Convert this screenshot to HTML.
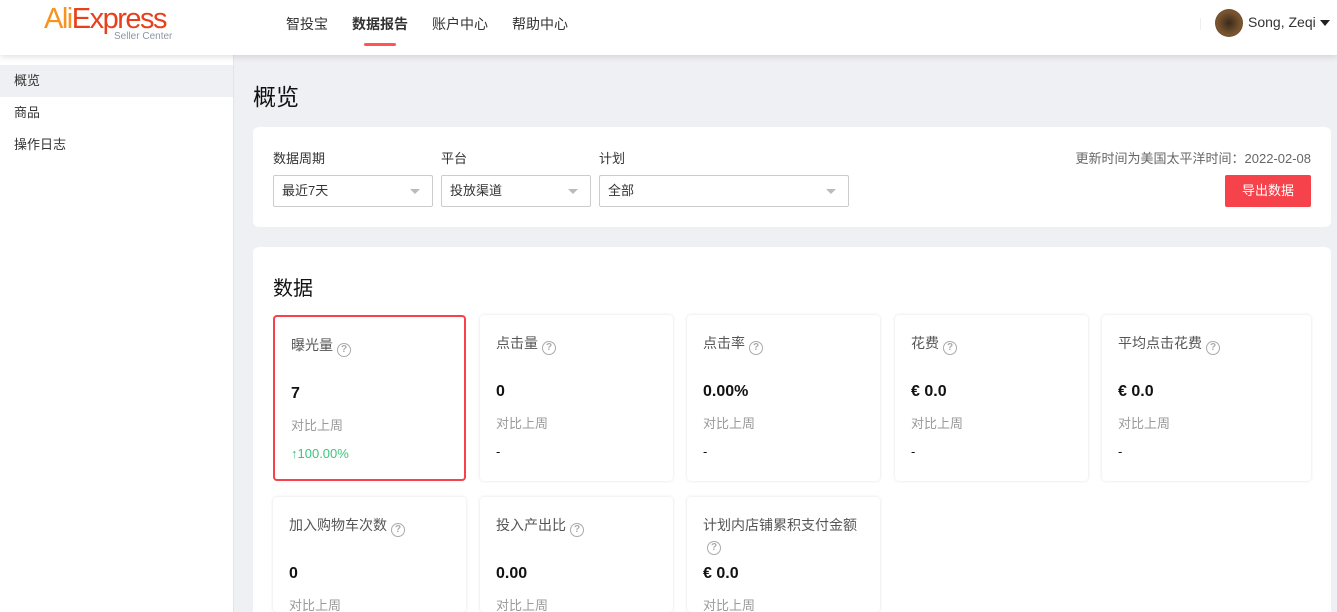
<!DOCTYPE html>
<html><head><meta charset="utf-8"><style>
*{box-sizing:border-box;margin:0;padding:0}
html,body{width:1337px;height:612px;overflow:hidden}
body{background:#eff0f4;font-family:"Liberation Sans","Noto Sans CJK SC",sans-serif;color:#333;position:relative}
.hdr{position:absolute;left:0;top:0;width:1337px;height:55px;background:#fff;box-shadow:0 2px 6px rgba(0,0,0,.12);z-index:2}
.logo{position:absolute;left:44px;top:3px;font-size:29px;letter-spacing:-1.5px;color:#e8401c}
.logo b{font-weight:normal;color:#f7931e}
.logo small{position:absolute;left:70px;top:28px;font-size:10px;color:#8a97a8;letter-spacing:0;white-space:nowrap}
.nav{position:absolute;top:14px;font-size:14px;color:#333}
.side{position:absolute;left:0;top:55px;width:234px;height:557px;background:#fff;border-right:1px solid #e4e4e4}
.side div{height:32px;line-height:32px;padding-left:14px;font-size:13px}
.card{position:absolute;background:#fff;border-radius:6px}
.lbl{position:absolute;font-size:13px;color:#333}
.sel{position:absolute;top:175px;height:32px;border:1px solid #ccc;border-radius:2px;font-size:13px;line-height:30px;padding-left:8px;background:#fff}
.sel:after{content:"";position:absolute;right:12px;top:13px;border:5px solid transparent;border-top:5px solid #bbb}
.m{position:absolute;background:#fff;border-radius:4px;box-shadow:0 0 3px rgba(0,0,0,.12);width:193px;height:166px;padding:18px 16px}
.m .t{font-size:14px;color:#555;height:26px}
.q{display:inline-block;width:14px;height:14px;border:1.5px solid #aaa;border-radius:50%;font-size:10px;line-height:11px;text-align:center;color:#aaa;vertical-align:-2px;margin-left:4px;font-weight:bold}
.m .v{font-size:16px;font-weight:bold;color:#111;margin-top:24px}
.m .c{font-size:13px;color:#999;margin-top:12px}
.m .d{font-size:13px;color:#111;margin-top:12px}
</style></head><body>
<div class="hdr">
<div class="logo"><b>Ali</b>Express<small>Seller Center</small></div>
<div class="nav" style="left:286px">智投宝</div>
<div class="nav" style="left:352px;font-weight:bold">数据报告</div>
<div style="position:absolute;left:364px;top:43px;width:32px;height:3px;border-radius:2px;background:#f55"></div>
<div class="nav" style="left:432px">账户中心</div>
<div class="nav" style="left:512px">帮助中心</div>
<div style="position:absolute;left:1200px;top:18px;width:1px;height:12px;background:#eee"></div>
<div style="position:absolute;left:1215px;top:9px;width:28px;height:28px;border-radius:50%;background:radial-gradient(#3a2a1a,#7a5530 60%,#5a3d22)"></div>
<div style="position:absolute;left:1248px;top:14px;font-size:14px;color:#333">Song, Zeqi</div>
<div style="position:absolute;left:1320px;top:20px;border:5px solid transparent;border-top:6px solid #222"></div>
</div>
<div class="side"><div style="margin-top:10px;background:#eff0f4">概览</div><div>商品</div><div>操作日志</div></div>
<div style="position:absolute;left:253px;top:78px;font-size:23px;color:#111">概览</div>
<div class="card" style="left:253px;top:127px;width:1078px;height:100px"></div>
<div class="lbl" style="left:273px;top:148px">数据周期</div>
<div class="lbl" style="left:441px;top:148px">平台</div>
<div class="lbl" style="left:599px;top:148px">计划</div>
<div class="sel" style="left:273px;width:160px">最近7天</div>
<div class="sel" style="left:441px;width:150px">投放渠道</div>
<div class="sel" style="left:599px;width:250px">全部</div>
<div style="position:absolute;right:26px;top:148px;font-size:13px;color:#666">更新时间为美国太平洋时间：2022-02-08</div>
<div style="position:absolute;left:1225px;top:175px;width:86px;height:32px;background:#f5424b;border-radius:2px;color:#fff;font-size:13px;text-align:center;line-height:32px">导出数据</div>
<div class="card" style="left:253px;top:247px;width:1078px;height:365px;border-radius:6px 6px 0 0"></div>
<div style="position:absolute;left:273px;top:272px;font-size:20px;color:#111">数据</div>
<div class="m" style="left:273px;top:315px;border:2px solid #f5424b;box-shadow:none"><div class="t">曝光量<span class="q">?</span></div><div class="v">7</div><div class="c">对比上周</div><div class="d" style="color:#3cc47c">↑100.00%</div></div>
<div class="m" style="left:480px;top:315px"><div class="t">点击量<span class="q">?</span></div><div class="v">0</div><div class="c">对比上周</div><div class="d">-</div></div>
<div class="m" style="left:687px;top:315px"><div class="t">点击率<span class="q">?</span></div><div class="v">0.00%</div><div class="c">对比上周</div><div class="d">-</div></div>
<div class="m" style="left:895px;top:315px"><div class="t">花费<span class="q">?</span></div><div class="v">€ 0.0</div><div class="c">对比上周</div><div class="d">-</div></div>
<div class="m" style="left:1102px;top:315px;width:209px"><div class="t">平均点击花费<span class="q">?</span></div><div class="v">€ 0.0</div><div class="c">对比上周</div><div class="d">-</div></div>
<div class="m" style="left:273px;top:497px;height:115px"><div class="t">加入购物车次数<span class="q">?</span></div><div class="v">0</div><div class="c">对比上周</div></div>
<div class="m" style="left:480px;top:497px;height:115px"><div class="t">投入产出比<span class="q">?</span></div><div class="v">0.00</div><div class="c">对比上周</div></div>
<div class="m" style="left:687px;top:497px;height:115px"><div class="t" style="height:48px">计划内店铺累积支付金额<br><span class="q" style="margin:4px 0 0 4px">?</span></div><div class="v" style="margin-top:2px">€ 0.0</div><div class="c">对比上周</div></div>
</body></html>
